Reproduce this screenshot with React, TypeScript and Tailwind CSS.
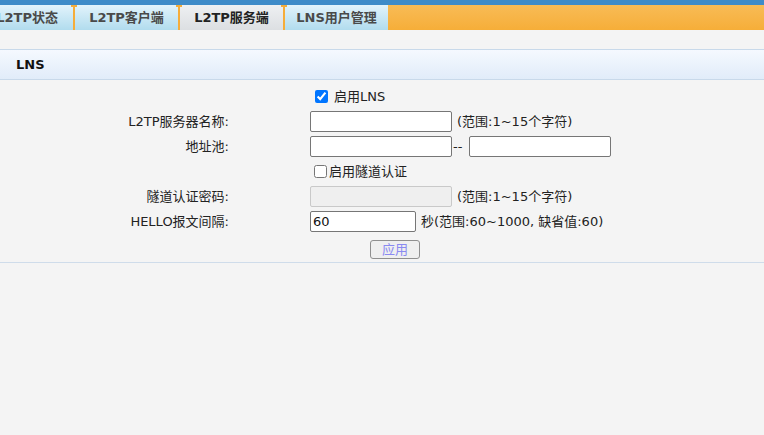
import React, { useState } from "react";

const tabs = [
    { label: "L2TP状态", first: true },
    { label: "L2TP客户端" },
    { label: "L2TP服务端", active: true },
    { label: "LNS用户管理" },
];

function Sep() {
    return (
        <div className="relative w-[2px] h-full bg-[#f5ad3a] shrink-0">
            <div className="absolute -left-[2px] top-0 w-[6px] h-[2px] bg-[#f5ad3a]" />
        </div>
    );
}

export default function App() {
    const [enableLns, setEnableLns] = useState(true);
    const [tunnelAuth, setTunnelAuth] = useState(false);
    const [hello, setHello] = useState("60");

    return (
        <div
            className="w-[764px] h-[435px] bg-[#f4f4f4] text-[13px] text-[#222] overflow-hidden"
            style={{ fontFamily: '"DejaVu Sans", "Noto Sans CJK SC", sans-serif' }}
        >
            <div className="h-[5px] bg-[#3e8bc8]" />
            <div className="h-[25px] flex bg-gradient-to-b from-[#f8bb55] to-[#f6ae38]">
                {tabs.map((t, i) => (
                    <React.Fragment key={t.label}>
                        {i > 0 && <Sep />}
                        <div
                            className={`h-full flex items-center font-bold shrink-0 whitespace-nowrap ${
                                t.first ? "w-[73px] justify-end pr-[15px]" : "w-[103px] justify-center"
                            } ${
                                t.active
                                    ? "bg-gradient-to-b from-[#eef0f2] to-[#dcdfe2] text-[#222]"
                                    : "bg-gradient-to-b from-[#e2f3fb] to-[#b1dcee] text-[#4a4a4a]"
                            }`}
                        >
                            <span className="shrink-0">{t.label}</span>
                        </div>
                    </React.Fragment>
                ))}
            </div>

            <div className="h-[19px]" />
            <div className="h-[31px] border-y border-[#c8d9ea] bg-gradient-to-b from-[#f5f9ff] to-[#e1ecf9] flex items-center pl-[16px] font-bold text-[#111]">
                LNS
            </div>

            <div className="pt-[4px] border-b border-[#cfdcea] whitespace-nowrap">
                <div className="flex h-[25px] items-center">
                    <div className="w-[229px] text-right" />
                    <div className="ml-[81px] flex items-center">
                        <input
                            type="checkbox"
                            checked={enableLns}
                            onChange={(e) => setEnableLns(e.target.checked)}
                            className="ml-[5px] w-[13px] h-[13px] accent-[#0075ff]"
                        />
                        <span className="ml-[6px]">启用LNS</span>
                    </div>
                </div>

                <div className="flex h-[25px] items-center">
                    <div className="w-[229px] text-right">L2TP服务器名称:</div>
                    <div className="ml-[81px] flex items-center">
                        <input className="w-[142px] h-[21px] border border-[#767676] rounded-[2px] bg-white px-[2px]" />
                        <span className="ml-[5px]">(范围:1~15个字符)</span>
                    </div>
                </div>

                <div className="flex h-[25px] items-center">
                    <div className="w-[229px] text-right">地址池:</div>
                    <div className="ml-[81px] flex items-center">
                        <input className="w-[142px] h-[21px] border border-[#767676] rounded-[2px] bg-white px-[2px]" />
                        <span className="w-[17px] pl-[1px]">--</span>
                        <input className="w-[142px] h-[21px] border border-[#767676] rounded-[2px] bg-white px-[2px]" />
                    </div>
                </div>

                <div className="flex h-[25px] items-center">
                    <div className="w-[229px] text-right" />
                    <div className="ml-[81px] flex items-center">
                        <input
                            type="checkbox"
                            checked={tunnelAuth}
                            onChange={(e) => setTunnelAuth(e.target.checked)}
                            className="ml-[4px] w-[13px] h-[13px] accent-[#0075ff]"
                        />
                        <span className="ml-[2px]">启用隧道认证</span>
                    </div>
                </div>

                <div className="flex h-[25px] items-center">
                    <div className="w-[229px] text-right">隧道认证密码:</div>
                    <div className="ml-[81px] flex items-center">
                        <input
                            disabled={!tunnelAuth}
                            type="password"
                            className="w-[142px] h-[21px] border border-[#c9c9c9] rounded-[2px] bg-[#efefef] px-[2px] disabled:bg-[#efefef]"
                        />
                        <span className="ml-[5px]">(范围:1~15个字符)</span>
                    </div>
                </div>

                <div className="flex h-[25px] items-center">
                    <div className="w-[229px] text-right">HELLO报文间隔:</div>
                    <div className="ml-[81px] flex items-center">
                        <input
                            value={hello}
                            onChange={(e) => setHello(e.target.value)}
                            className="w-[106px] h-[21px] border border-[#767676] rounded-[2px] bg-white px-[2px] text-[#111]"
                        />
                        <span className="ml-[5px]">秒(范围:60~1000, 缺省值:60)</span>
                    </div>
                </div>

                <div className="flex justify-center pt-[6px] pb-[3px]">
                    <button
                        disabled
                        className="ml-[26px] w-[50px] h-[19px] border border-[#8f8f8f] rounded-[3px] bg-[#efefef] text-[#8a8af2] text-[13px] leading-none"
                    >
                        应用
                    </button>
                </div>
            </div>
        </div>
    );
}
